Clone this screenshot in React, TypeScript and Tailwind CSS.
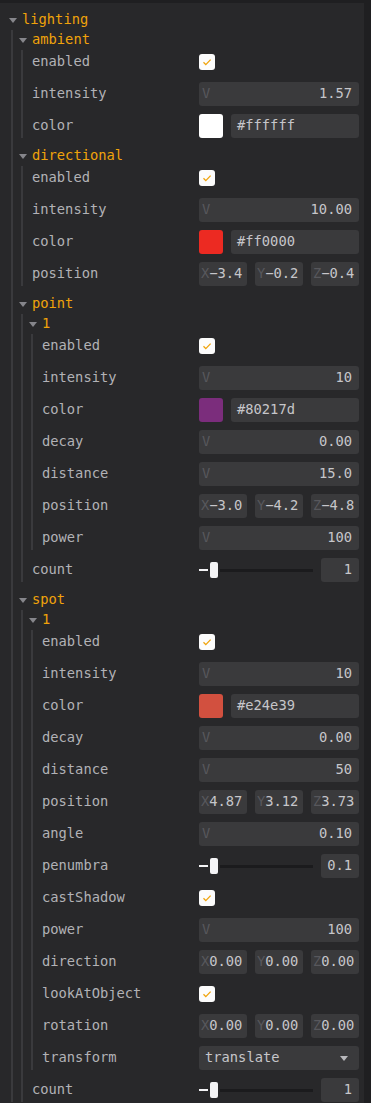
import React from 'react';

const mono = { fontFamily: '"DejaVu Sans Mono", "Liberation Mono", monospace' };

const Caret = ({ className }: { className?: string }) => (
  <svg width="8" height="5" viewBox="0 0 8 5" className={className}>
    <path d="M0 0 L8 0 L4 5 Z" fill="currentColor" />
  </svg>
);

const Folder = ({ title, children }: { title: string; children: React.ReactNode }) => (
  <div className="flex flex-col">
    <div className="flex h-[20px] items-center">
      <Caret className="w-[8px] text-[#86868b]" />
      <span className="ml-[5px] text-[#f0a30a]">{title}</span>
    </div>
    <div className="ml-[2px] flex flex-col gap-[8px] border-l-2 border-[#3a3a3d] pl-[6px]">{children}</div>
  </div>
);

const Row = ({ label, children }: { label: string; children: React.ReactNode }) => (
  <div className="flex h-[24px] items-center">
    <span className="min-w-0 flex-1 pl-[3px] text-[#b2b2b6]">{label}</span>
    <div className="flex w-[160px] shrink-0 items-center">{children}</div>
  </div>
);

const Check = () => (
  <div className="flex h-[16px] w-[16px] items-center justify-center rounded-[3px] bg-[#fcfcfc]">
    <svg width="16" height="16" viewBox="0 0 16 16">
      <path d="M4.5 8.3 L6.8 10.6 L11.6 5.6" fill="none" stroke="#f0a30a" strokeWidth="1.3" />
    </svg>
  </div>
);

const Num = ({ v }: { v: string }) => (
  <div className="flex h-[24px] w-full items-center rounded-[3px] bg-[#3a3a3c] pl-[3px] pr-[7px]">
    <span className="text-[#58585c]">V</span>
    <span className="flex-1 text-right text-[#c6c6ca]">{v}</span>
  </div>
);

const Color = ({ c, hex }: { c: string; hex: string }) => (
  <div className="flex w-full items-center gap-[8px]">
    <div className="h-[24px] w-[24px] shrink-0 rounded-[3px]" style={{ backgroundColor: c }} />
    <div className="flex h-[24px] flex-1 items-center rounded-[3px] bg-[#3a3a3c] pl-[6px] text-[#c6c6ca]">{hex}</div>
  </div>
);

const Vec = ({ v }: { v: [string, string, string] }) => (
  <div className="grid w-full grid-cols-3 gap-[8px]">
    {['X', 'Y', 'Z'].map((k, i) => (
      <div key={k} className="flex h-[24px] items-center overflow-hidden rounded-[3px] bg-[#3a3a3c] pl-[2px] pr-[5px]">
        <span className="text-[#58585c]">{k}</span>
        <span className="flex-1 whitespace-nowrap text-right text-[#c6c6ca]">{v[i]}</span>
      </div>
    ))}
  </div>
);

const Slider = ({ v }: { v: string }) => (
  <div className="flex w-full items-center gap-[8px]">
    <div className="flex flex-1 items-center gap-[2px]">
      <div className="h-[2px] w-[9px] bg-[#f4f4f6]" />
      <div className="h-[16px] w-[8px] rounded-[2px] bg-[#f4f4f6]" />
      <div className="h-[3px] flex-1 bg-[#1b1b1d]" />
    </div>
    <div className="flex h-[24px] w-[38px] items-center justify-end rounded-[3px] bg-[#3a3a3c] pr-[7px] text-[#c6c6ca]">{v}</div>
  </div>
);

const Select = ({ v }: { v: string }) => (
  <div className="flex h-[24px] w-full items-center justify-between rounded-[3px] bg-[#3a3a3c] pl-[6px] pr-[11px] text-[#c6c6ca]">
    <span>{v}</span>
    <Caret className="text-[#b8b8bc]" />
  </div>
);

const App = () => {
  return (
    <div className="min-h-[1103px] w-[371px] bg-[#1f1f21] pt-[3px] text-[13.75px] leading-none" style={mono}>
      <div className="min-h-[1100px] w-[364px] bg-[#28282a] pl-[9px] pr-[5px] pt-[7px]">
        <Folder title="lighting">
          <Folder title="ambient">
            <Row label="enabled"><Check /></Row>
            <Row label="intensity"><Num v="1.57" /></Row>
            <Row label="color"><Color c="#ffffff" hex="#ffffff" /></Row>
          </Folder>
          <Folder title="directional">
            <Row label="enabled"><Check /></Row>
            <Row label="intensity"><Num v="10.00" /></Row>
            <Row label="color"><Color c="#ec2a22" hex="#ff0000" /></Row>
            <Row label="position"><Vec v={['−3.4', '−0.2', '−0.4']} /></Row>
          </Folder>
          <Folder title="point">
            <Folder title="1">
              <Row label="enabled"><Check /></Row>
              <Row label="intensity"><Num v="10" /></Row>
              <Row label="color"><Color c="#7b2d7c" hex="#80217d" /></Row>
              <Row label="decay"><Num v="0.00" /></Row>
              <Row label="distance"><Num v="15.0" /></Row>
              <Row label="position"><Vec v={['−3.0', '−4.2', '−4.8']} /></Row>
              <Row label="power"><Num v="100" /></Row>
            </Folder>
            <Row label="count"><Slider v="1" /></Row>
          </Folder>
          <Folder title="spot">
            <Folder title="1">
              <Row label="enabled"><Check /></Row>
              <Row label="intensity"><Num v="10" /></Row>
              <Row label="color"><Color c="#d2503f" hex="#e24e39" /></Row>
              <Row label="decay"><Num v="0.00" /></Row>
              <Row label="distance"><Num v="50" /></Row>
              <Row label="position"><Vec v={['4.87', '3.12', '3.73']} /></Row>
              <Row label="angle"><Num v="0.10" /></Row>
              <Row label="penumbra"><Slider v="0.1" /></Row>
              <Row label="castShadow"><Check /></Row>
              <Row label="power"><Num v="100" /></Row>
              <Row label="direction"><Vec v={['0.00', '0.00', '0.00']} /></Row>
              <Row label="lookAtObject"><Check /></Row>
              <Row label="rotation"><Vec v={['0.00', '0.00', '0.00']} /></Row>
              <Row label="transform"><Select v="translate" /></Row>
            </Folder>
            <Row label="count"><Slider v="1" /></Row>
          </Folder>
        </Folder>
      </div>
    </div>
  );
};

export default App;
